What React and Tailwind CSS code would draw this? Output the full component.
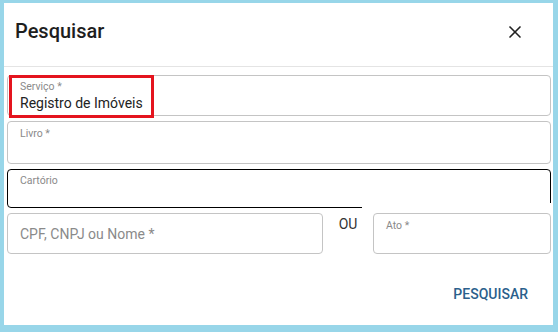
import { X } from 'lucide-react'

function Campo({ label, value, className = '' }) {
  return (
    <div className={`border border-[#c4c4c4] rounded-[4px] px-3 ${className}`}>
      <div className="text-[10.5px] text-[#8a8a8a] leading-none pt-[7px]">{label}</div>
      {value && <div className="text-[14px] text-[#222] leading-none mt-[3px]">{value}</div>}
    </div>
  )
}

export default function App() {
  return (
    <div
      className="w-[558px] h-[332px] bg-[#98d6e9] pl-[4px] pr-[5px] pt-[3px] pb-[7px]"
      style={{ fontFamily: 'Roboto, "Liberation Sans", sans-serif' }}
    >
      <div className="w-full h-full bg-white flex flex-col">
        {/* Header */}
        <div className="h-[64px] flex items-center justify-between pl-[11px] pr-[28px] border-b border-[#e4e4e4]">
          <h2 className="text-[20px] font-medium text-[#1e1e1e] leading-none mt-[-7px]">Pesquisar</h2>
          <X className="w-[20px] h-[20px] text-[#222] mt-[-6px]" strokeWidth={2} />
        </div>

        {/* Form */}
        <div className="flex flex-col gap-[5px] pl-[3px] pr-[2px] pt-[8px]">
          <div className="relative h-[41px] border border-[#c4c4c4] rounded-[4px]">
            <div className="absolute left-[1px] top-[-1px] w-[145px] h-[43px] border-[3px] border-[#e4141e]" />
            <div className="pl-[12px] pt-[6px]">
              <div className="text-[10.5px] text-[#8a8a8a] leading-none">Serviço *</div>
              <div className="text-[14px] text-[#222] leading-none mt-[3px]">Registro de Imóveis</div>
            </div>
          </div>

          <Campo label="Livro *" className="h-[43px]" />

          <div className="relative h-[39px] border border-black rounded-[4px] px-3">
            <div className="text-[10.5px] text-[#8a8a8a] leading-none pt-[6px]">Cartório</div>
            <div className="absolute right-[-2px] bottom-[-2px] w-[190px] h-[6px] bg-white" />
          </div>

          <div className="flex items-start">
            <div className="w-[316px] h-[41px] border border-[#c4c4c4] rounded-[4px] px-3 flex items-center">
              <span className="text-[14px] text-[#8a8a8a] leading-none">CPF, CNPJ ou Nome *</span>
            </div>
            <div className="w-[50px] text-center text-[14px] text-[#333] leading-none pt-[4px]">OU</div>
            <Campo label="Ato *" className="flex-1 h-[41px]" />
          </div>
        </div>

        <div className="flex justify-end mt-auto pr-[25px] pb-[24px]">
          <button className="text-[14px] font-medium text-[#2b5f8c] leading-none">PESQUISAR</button>
        </div>
      </div>
    </div>
  )
}
